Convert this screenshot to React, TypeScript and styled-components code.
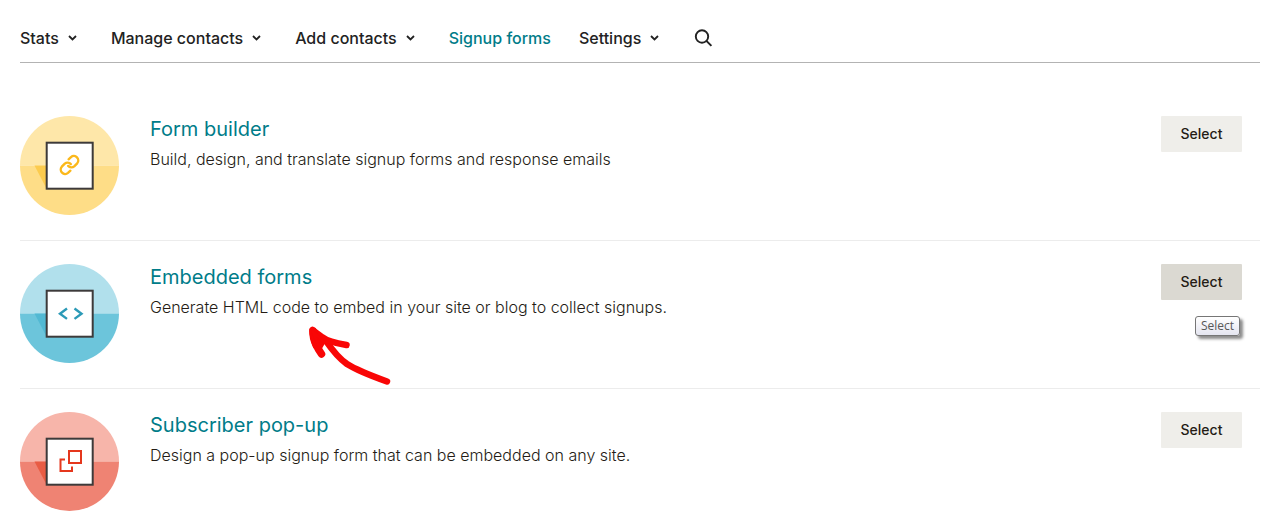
import React from "react";
import styled, { createGlobalStyle } from "styled-components";

const GlobalStyle = createGlobalStyle`
  * { box-sizing: border-box; }
  body {
    margin: 0;
    background: #fff;
    color: #241c15;
    font-family: Inter, "Liberation Sans", sans-serif;
  }
`;

const Page = styled.main`
  padding: 14px 19px 0 20px;
`;

const Nav = styled.nav`
  display: flex;
  align-items: center;
  gap: 28px;
  height: 49px;
  border-bottom: 1px solid #b3b3b3;
`;

const NavButton = styled.button`
  display: flex;
  align-items: center;
  gap: 9px;
  padding: 0 6px 0 0;
  border: 0;
  background: none;
  color: #222;
  font: 500 16px/24px Inter, "Liberation Sans", sans-serif;
  white-space: nowrap;
  cursor: pointer;
`;

const NavLink = styled.a`
  color: #007c89;
  font-size: 16px;
  font-weight: 500;
  line-height: 24px;
  white-space: nowrap;
  text-decoration: none;
`;

const SearchButton = styled.button`
  display: flex;
  padding: 0;
  border: 0;
  background: none;
  color: #222;
  cursor: pointer;
`;

const FormList = styled.ul`
  margin: 30px 0 0;
  padding: 0;
  list-style: none;
`;

const FormRow = styled.li`
  display: flex;
  align-items: flex-start;
  gap: 30px;
  padding: 23px 18px 24px 0;
  border-bottom: 1px solid #ececec;

  &:last-child {
    padding-bottom: 0;
    border-bottom: 0;
  }
`;

const Badge = styled.svg`
  flex: none;
  display: block;
`;

const Details = styled.div`
  position: relative;
  flex: 1;
  min-width: 0;
`;

const Title = styled.h2`
  margin: 0;
  font-size: 20px;
  font-weight: 400;
  line-height: 26px;

  a {
    color: #007c89;
    text-decoration: none;
  }
`;

const Description = styled.p`
  margin: 5px 0 0;
  font-size: 16px;
  font-weight: 300;
  line-height: 24px;
`;

const Action = styled.div`
  position: relative;
  flex: none;
`;

const SelectButton = styled.button<{ $hovered?: boolean }>`
  display: block;
  min-width: 81px;
  height: 36px;
  padding: 0 19px;
  border: 0;
  border-radius: 1px;
  background: ${(p) => (p.$hovered ? "#dbd9d2" : "#efeeea")};
  color: #241c15;
  font: 500 14px/20px Inter, "Liberation Sans", sans-serif;
  cursor: pointer;
`;

const Tooltip = styled.span`
  position: absolute;
  top: 52px;
  right: 2px;
  padding: 0 5px;
  border: 1px solid #767676;
  border-radius: 3px;
  background: linear-gradient(#fff, #e4e5f0);
  box-shadow: 3px 3px 3px rgba(0, 0, 0, 0.45);
  color: #575757;
  font: 12px/18px "Open Sans", sans-serif;
`;

const Arrow = styled.svg`
  position: absolute;
  top: 56px;
  left: 150px;
`;

const Chevron = () => (
  <svg width="9" height="6" viewBox="0 0 9 6" fill="none" aria-hidden="true">
    <path d="M1 1l3.5 3.5L8 1" stroke="#222" strokeWidth="1.8" />
  </svg>
);

const SearchIcon = () => (
  <svg width="20" height="18" viewBox="0 0 20 18" fill="none" aria-hidden="true">
    <circle cx="9" cy="7.5" r="6.2" stroke="currentColor" strokeWidth="1.9" />
    <path d="M13.4 11.9l5 5" stroke="currentColor" strokeWidth="2" />
  </svg>
);

type Palette = { top: string; bottom: string; shade: string; ink: string };

const FormBadge = ({ palette, children }: { palette: Palette; children: React.ReactNode }) => (
  <Badge width="100" height="100" viewBox="0 0 100 100" fill="none" aria-hidden="true">
    <path d="M0 49.5a49.5 49.5 0 0 1 99 0z" fill={palette.top} />
    <path d="M0 49.5a49.5 49.5 0 0 0 99 0z" fill={palette.bottom} />
    <path d="M14.5 49.5H27v24z" fill={palette.shade} />
    <rect x="26.7" y="26.7" width="46" height="46" fill="#fff" stroke="#3d3a3a" strokeWidth="2" />
    <g stroke={palette.ink}>{children}</g>
  </Badge>
);

const linkHalf = "M48.6 43.3l2.4-2.2a4.4 4.4 0 0 1 6.2 6.2l-3 3a4.2 4.2 0 0 1-6 -.4";

const LinkGlyph = () => (
  <g strokeWidth="2.4" strokeLinecap="round" strokeLinejoin="round">
    <path d={linkHalf} />
    <path d={linkHalf} transform="rotate(180 49.5 49)" />
  </g>
);

const CodeGlyph = () => (
  <path d="M47 44.5l-7 5.2 7 5.2M54.5 44.5l7 5.2-7 5.2" strokeWidth="2.4" />
);

const PopupGlyph = () => (
  <g strokeWidth="2">
    <rect x="49" y="39" width="12" height="12" />
    <path d="M45 47.5h-4.5V59H52v-4.5" />
  </g>
);

const forms = [
  {
    title: "Form builder",
    description: "Build, design, and translate signup forms and response emails",
    palette: { top: "#fee7a9", bottom: "#fedd87", shade: "#fccb4e", ink: "#fbb81b" },
    glyph: <LinkGlyph />,
  },
  {
    title: "Embedded forms",
    description: "Generate HTML code to embed in your site or blog to collect signups.",
    palette: { top: "#b1e0ec", bottom: "#6cc5db", shade: "#52b9d3", ink: "#2c9ab7" },
    glyph: <CodeGlyph />,
    hovered: true,
  },
  {
    title: "Subscriber pop-up",
    description: "Design a pop-up signup form that can be embedded on any site.",
    palette: { top: "#f7b5aa", bottom: "#ef8373", shade: "#e95c44", ink: "#e5371d" },
    glyph: <PopupGlyph />,
  },
];

export default function App() {
  return (
    <>
      <GlobalStyle />
      <Page>
        <Nav>
          <NavButton>Stats<Chevron /></NavButton>
          <NavButton>Manage contacts<Chevron /></NavButton>
          <NavButton>Add contacts<Chevron /></NavButton>
          <NavLink href="#signup-forms">Signup forms</NavLink>
          <NavButton>Settings<Chevron /></NavButton>
          <SearchButton aria-label="Search"><SearchIcon /></SearchButton>
        </Nav>
        <FormList>
          {forms.map((form) => (
            <FormRow key={form.title}>
              <FormBadge palette={form.palette}>{form.glyph}</FormBadge>
              <Details>
                <Title><a href="#form">{form.title}</a></Title>
                <Description>{form.description}</Description>
                {form.hovered && (
                  <Arrow width="100" height="70" viewBox="0 0 100 70" fill="none" aria-hidden="true">
                    <g stroke="#f90606" strokeLinecap="round" strokeLinejoin="round">
                      <path d="M87 61.5Q58 51 47 44Q37 37 26 21" strokeWidth="6.5" />
                      <path d="M46.5 25Q28 22 22 17L12.5 10Q12 18 16 26" strokeWidth="6.5" />
                      <path d="M13 11Q14 24 21.5 34" strokeWidth="7.5" />
                      <path d="M13 12L24 22L20 29z" fill="#f90606" strokeWidth="3" />
                    </g>
                  </Arrow>
                )}
              </Details>
              <Action>
                <SelectButton $hovered={form.hovered}>Select</SelectButton>
                {form.hovered && <Tooltip role="tooltip">Select</Tooltip>}
              </Action>
            </FormRow>
          ))}
        </FormList>
      </Page>
    </>
  );
}
